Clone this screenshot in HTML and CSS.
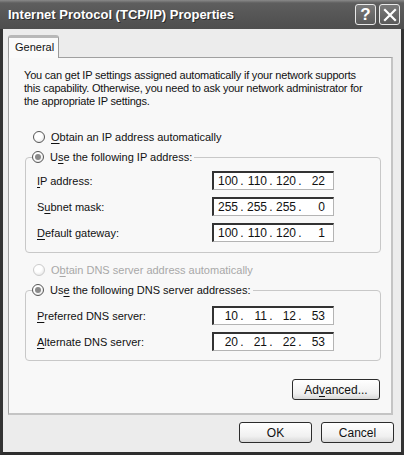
FILE: index.html
```html
<!DOCTYPE html>
<html lang="en">
    <head>
        <meta charset="UTF-8">
        <title>Internet Protocol (TCP/IP) Properties</title>
        <link rel="stylesheet" href="styles.css">
    </head>
    <body>
        <div class="window">
            <div class="titlebar">
                <span class="title">Internet Protocol (TCP/IP) Properties</span>
                <span class="capbtn">?</span>
                <span class="capbtn">
                    <svg width="14" height="14" viewBox="0 0 14 14"><path d="M2 2 L12 12 M12 2 L2 12" stroke="#fff" stroke-width="2.2" stroke-linecap="square"/></svg>
                </span>
            </div>
            <div class="body">
                <div class="tabs">
                    <div class="tab">General</div>
                </div>
                <div class="page">
                    <p class="intro">You can get IP settings assigned automatically if your network supports<br>this capability. Otherwise, you need to ask your network administrator for<br>the appropriate IP settings.</p>

                    <div class="radio first"><span class="dot"></span><span><u>O</u>btain an IP address automatically</span></div>
                    <fieldset class="group">
                        <legend class="radio"><span class="dot on"></span><span>U<u>s</u>e the following IP address:</span></legend>
                        <div class="row"><span class="label"><u>I</u>P address:</span><span class="ip"><b>100</b><i>.</i><b>110</b><i>.</i><b>120</b><i>.</i><b>22</b></span></div>
                        <div class="row"><span class="label">S<u>u</u>bnet mask:</span><span class="ip"><b>255</b><i>.</i><b>255</b><i>.</i><b>255</b><i>.</i><b>0</b></span></div>
                        <div class="row"><span class="label"><u>D</u>efault gateway:</span><span class="ip"><b>100</b><i>.</i><b>110</b><i>.</i><b>120</b><i>.</i><b>1</b></span></div>
                    </fieldset>

                    <div class="radio off"><span class="dot"></span><span>O<u>b</u>tain DNS server address automatically</span></div>
                    <fieldset class="group dns">
                        <legend class="radio"><span class="dot on"></span><span>Us<u>e</u> the following DNS server addresses:</span></legend>
                        <div class="row"><span class="label"><u>P</u>referred DNS server:</span><span class="ip"><b>10</b><i>.</i><b>11</b><i>.</i><b>12</b><i>.</i><b>53</b></span></div>
                        <div class="row"><span class="label"><u>A</u>lternate DNS server:</span><span class="ip"><b>20</b><i>.</i><b>21</b><i>.</i><b>22</b><i>.</i><b>53</b></span></div>
                    </fieldset>

                    <div class="actions">
                        <button class="btn wide">Ad<u>v</u>anced...</button>
                    </div>
                </div>
                <div class="footer">
                    <button class="btn">OK</button>
                    <button class="btn">Cancel</button>
                </div>
            </div>
        </div>
    </body>
</html>
```

FILE: styles.css
```css
* {
    box-sizing: border-box;
    margin: 0px;
    padding: 0px;
}
body {
    background-color: #ececec;
    font-family: Tahoma, "Liberation Sans", Arial, sans-serif;
    font-size: 11px;
    color: #111111;
}
u {
    text-decoration: underline;
    text-underline-offset: 2px;
}
.window {
    background-color: #ececec;
    border-bottom: 3px solid #2e2e2e;
    border-left: 3px solid #333333;
    border-right: 3px solid #333333;
    display: flex;
    flex-direction: column;
    height: 455px;
    width: 404px;
}
.titlebar {
    align-items: center;
    background: linear-gradient(#8a8a8a 0px, #5e5e5e 3px, #565656 15px, #4e4e4e 29px);
    display: flex;
    gap: 3px;
    height: 29px;
    margin: 0 -3px;
    padding: 0 4px 0 8px;
    .title {
        color: #ffffff;
        flex: 1;
        font-size: 13px;
        font-weight: bold;
        text-shadow: 1px 1px 0 #2a2a2a;
    }
    .capbtn {
        align-items: center;
        background: linear-gradient(#7a7a7a, #5a5a5a);
        border: 1px solid #e8e8e8;
        border-radius: 3px;
        color: #ffffff;
        display: flex;
        font-size: 17px;
        font-weight: bold;
        height: 21px;
        justify-content: center;
        width: 21px;
    }
}
.body {
    display: flex;
    flex: 1;
    flex-direction: column;
    padding: 6px 5px 0 5px;
}
.tabs {
    display: flex;
    height: 22px;
    .tab {
        background-color: #fafafa;
        border: 1px solid #9a9a9a;
        border-bottom: none;
        border-top: 3px solid #b8b8b8;
        border-radius: 3px 3px 0 0;
        margin-bottom: -1px;
        padding: 3px 0 0 6px;
        position: relative;
        width: 51px;
    }
}
.page {
    background-color: #f8f8f8;
    border: 1px solid #a0a0a0;
    border-right: 2px solid #c4c4c4;
    border-bottom: 2px solid #c4c4c4;
    height: 358px;
    margin-right: 3px;
    padding: 11px 10px 0 15px;
}
.intro {
    letter-spacing: -0.2px;
    line-height: 13px;
    white-space: nowrap;
}
.radio {
    align-items: center;
    display: flex;
    gap: 6px;
    height: 16px;
    margin-left: 9px;
    &.first {
        margin-top: 21px;
    }
    &.off {
        color: #a8a8a8;
        margin-top: 9px;
        .dot {
            border-color: #cccccc;
        }
    }
    .dot {
        background: radial-gradient(circle at 40% 35%, #ffffff 40%, #dcdcdc);
        border: 1px solid #555555;
        border-radius: 50%;
        display: inline-block;
        flex: none;
        height: 12px;
        position: relative;
        width: 12px;
    }
    .dot.on::after {
        background-color: #8a8a8a;
        border-radius: 50%;
        content: "";
        height: 6px;
        left: 2px;
        position: absolute;
        top: 2px;
        width: 6px;
    }
}
.group {
    border: 1px solid #c8c8c8;
    border-radius: 4px;
    display: flex;
    flex-direction: column;
    gap: 7px;
    margin: 4px 0 0 1px;
    padding: 6px 5px 10px 11px;
    width: 356px;
    legend.radio {
        margin-left: -5px;
        padding: 0 2px 0 0;
    }
    &.dns {
        margin-top: 4px;
        padding-top: 8px;
        padding-bottom: 9px;
    }
}
.row {
    align-items: center;
    display: flex;
    height: 19px;
    .label {
        width: 175px;
    }
}
.ip {
    background-color: #ffffff;
    border-top: 2px solid #333333;
    border-left: 2px solid #333333;
    border-right: 1px solid #b4b4b4;
    border-bottom: 1px solid #b4b4b4;
    display: flex;
    font-size: 12px;
    height: 19px;
    line-height: 16px;
    padding-left: 3px;
    width: 122px;
    b {
        font-weight: normal;
        text-align: right;
        width: 21px;
    }
    i {
        font-style: normal;
        text-align: center;
        width: 8px;
    }
}
.actions {
    display: flex;
    justify-content: flex-end;
    margin: 18px 1px 0 0;
}
.btn {
    background: linear-gradient(#ffffff, #f0f0f0 70%, #d8d8d8);
    border: 1px solid #2c2c2c;
    border-radius: 3px;
    color: #111111;
    font-family: inherit;
    font-size: 12px;
    height: 21px;
    width: 73px;
    &.wide {
        width: 88px;
    }
}
.footer {
    display: flex;
    gap: 9px;
    justify-content: flex-end;
    padding: 7px 2px 0 0;
}
```
